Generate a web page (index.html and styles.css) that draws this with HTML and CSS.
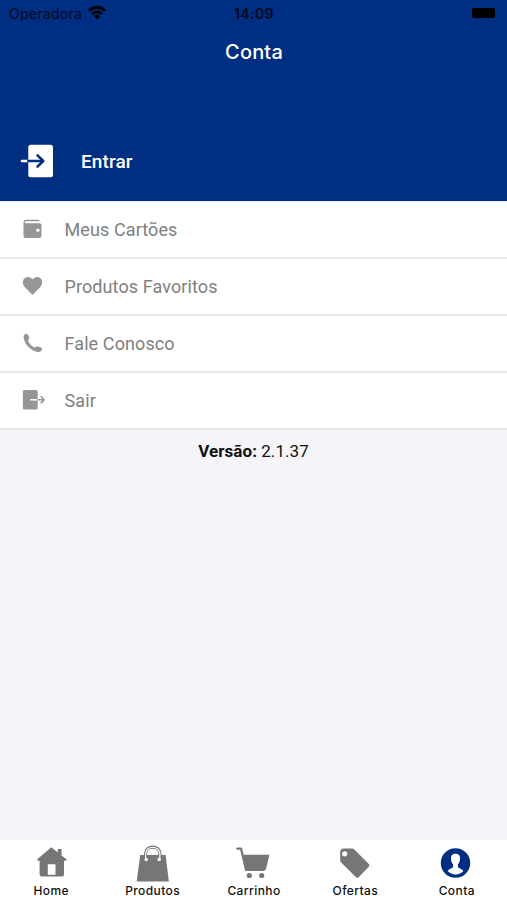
FILE: index.html
```html
<!DOCTYPE html>
<html lang="pt-BR">
<head>
<meta charset="utf-8">
<meta name="viewport" content="width=device-width, initial-scale=1">
<title>Conta</title>
<link rel="stylesheet" href="styles.css">
</head>
<body>
<div class="app">
  <header class="header">
    <div class="status">
      <div class="carrier"><span>Operadora</span>
        <svg width="20" height="16" viewBox="0 0 20 16" fill="none" stroke="#000" stroke-width="2.7"><path d="M1.9 5.7Q10 -1.2 18.1 5.7M4.9 9Q10 4.8 15.1 9"/><path d="M6.9 11Q10 8.5 13.1 11L10 14.3Z" fill="#000" stroke="none"/></svg>
      </div>
      <div class="time">14:09</div>
      <div class="power"><span class="battery"></span></div>
    </div>
    <h1 class="title">Conta</h1>
    <a class="login">
      <svg width="34" height="34" viewBox="0 0 34 34"><rect x="8.3" y="0.7" width="24.7" height="32.6" rx="2.5" fill="#fff"/><path d="M2 17h7" stroke="#fff" stroke-width="2.6" stroke-linecap="round"/><path d="M8.3 17h15M17.5 11.3l5.8 5.7-5.8 5.7" fill="none" stroke="#002e82" stroke-width="2.5" stroke-linecap="round" stroke-linejoin="round"/></svg>
      <span>Entrar</span>
    </a>
  </header>
  <nav class="menu">
    <a class="row"><svg width="24" height="24" viewBox="0 0 24 24" fill="#969696"><path d="M2.5 5Q2.5 2.7 5 2.7H17Q18.7 2.7 18.7 4.3H5Q3.8 4.3 3.8 5.3T5 6.3H18.3Q20.5 6.3 20.5 8.3V18.7Q20.5 20.9 18.3 20.9H4.5Q2.5 20.9 2.5 18.7Z"/><circle cx="16.9" cy="13.3" r="1.7" fill="#fff"/></svg><span>Meus Cartões</span></a>
    <a class="row"><svg width="24" height="24" viewBox="0 0 24 24" fill="#969696"><path d="M11.5 21L3.9 13.2C1.2 10.4 1.2 6.4 3.6 4.3C6 2.2 9.7 2.8 11.5 5.5C13.3 2.8 17 2.2 19.4 4.3C21.8 6.4 21.8 10.4 19.1 13.2Z"/></svg><span>Produtos Favoritos</span></a>
    <a class="row"><svg width="24" height="24" viewBox="0 0 24 24" fill="#969696"><path d="M4.3 3L6 2.8Q8 4.8 8.3 7.2L6.9 9.8C8.3 12.8 10.6 14.9 13.4 16.5L15.7 15.5Q19.3 15.2 21 17.5V18.9C19.7 20.6 17.7 21.4 15.7 20.8C9.1 18.9 3.9 13.5 2.7 7.2C2.3 5.3 2.9 3.9 4.3 3Z"/></svg><span>Fale Conosco</span></a>
    <a class="row"><svg width="24" height="24" viewBox="0 0 24 24"><rect x="1.8" y="2" width="14.9" height="19.5" rx="1.6" fill="#969696"/><path d="M9.3 11.8h7.4" stroke="#fff" stroke-width="1.5"/><path d="M16.7 11.8h6M19.7 8.3l3.3 3.5-3.3 3.5" fill="none" stroke="#969696" stroke-width="1.6"/></svg><span>Sair</span></a>
  </nav>
  <main class="content"><p class="version"><b>Versão:</b> 2.1.37</p></main>
  <footer class="tabs">
    <a class="tab"><svg width="40" height="40" viewBox="0 0 40 40" fill="#767676"><path fill-rule="evenodd" d="M20.3 5.3L26.8 10.5V7H30.5V13.4L35.8 17.6 35 18.8H33V32.4Q33 34.5 31 34.5H10.6Q8.6 34.5 8.6 32.4V18.8H7L6 17.5ZM16.8 22.3V32.7H24.5V22.3Z"/></svg><span>Home</span></a>
    <a class="tab"><svg width="40" height="40" viewBox="0 0 40 40" fill="none"><path d="M8.2 13H33.6L36.9 39.5H4.7Z" fill="#767676"/><g stroke-linecap="round"><path d="M14.3 17.4L13.5 15V12C13.5 2.7 28 2.7 28 12V15L27.2 17.4" stroke="#767676" stroke-width="3.2"/><path d="M14.3 17.6Q13.6 16.5 13.6 14V12C13.6 3 27.9 3 27.9 12V14Q27.9 16.5 27.2 17.6" stroke="#fff" stroke-width="1.2"/></g><circle cx="14.2" cy="17.5" r="1.7" fill="#fff"/><circle cx="27.2" cy="17.5" r="1.7" fill="#fff"/></svg><span>Produtos</span></a>
    <a class="tab"><svg width="40" height="40" viewBox="0 0 40 40" fill="#767676"><path d="M4.3 6.6H8L13.1 28" fill="none" stroke="#767676" stroke-width="2.3" stroke-linecap="round" stroke-linejoin="round"/><path d="M9.4 12.8H35.6Q36.4 12.8 36.2 13.8L33.2 26.5Q32.7 28.9 30.6 28.9H15Q12.9 28.9 12.3 26.7Z"/><circle cx="16.3" cy="33.5" r="2.6"/><circle cx="28.7" cy="33.5" r="2.6"/></svg><span>Carrinho</span></a>
    <a class="tab"><svg width="40" height="40" viewBox="0 0 40 40" fill="#767676"><path fill-rule="evenodd" d="M5.2 10.2Q5.2 6.6 8.7 6.6L16.8 6.5Q18.2 6.5 19.3 7.6L33.8 22.1Q35.1 23.4 33.8 24.7L23.7 35.2Q22.4 36.5 21.1 35.2L6.2 20.6Q5.2 19.5 5.2 18.2ZM9.7 9.2A2.6 2.6 0 1 0 9.7 14.4A2.6 2.6 0 1 0 9.7 9.2Z"/></svg><span>Ofertas</span></a>
    <a class="tab"><svg width="40" height="40" viewBox="0 0 40 40"><circle cx="19.5" cy="21" r="14.7" fill="#002e82"/><path d="M19.5 11.7C16.3 11.7 14.8 13.7 15 16.5C15.1 19.2 15.8 21.1 17.1 22.5V25.1C16.2 26.7 12.7 27.1 11.6 29C15.5 33.6 23.5 33.6 27.4 29C26.3 27.1 22.8 26.7 21.9 25.1V22.5C23.2 21.1 23.9 19.2 24 16.5C24.2 13.7 22.7 11.7 19.5 11.7Z" fill="#fff"/></svg><span>Conta</span></a>
  </footer>
</div>
</body>
</html>
```
FILE: styles.css
```css
* { box-sizing: border-box; }
body { margin: 0; font-family: Roboto, "Liberation Sans", sans-serif; }
.app { height: 900px; display: flex; flex-direction: column; background: #f4f4f9; }
.header { height: 201px; background: #002e82; color: #fff; }
.status {
  height: 28px;
  display: grid;
  grid-template-columns: 1fr auto 1fr;
  align-items: center;
  padding: 0 9px;
  color: #000;
  font: 14px/28px Inter, sans-serif;
}
.carrier { display: flex; align-items: center; gap: 5px; color: #00081c; letter-spacing: 0.28px; }
.carrier svg { margin-top: -3px; }
.time { padding-left: 1px; font-weight: 600; color: #00081c; letter-spacing: 0.4px; }
.power { display: flex; justify-content: flex-end; }
.battery { width: 23px; height: 10px; margin: -2px 3px 0 0; border-radius: 2px; background: #000; }
.title { margin: 9px 0 0; padding-left: 1px; text-align: center; font: 500 20px/30px Inter, sans-serif; letter-spacing: 0.15px; }
.login { display: flex; align-items: center; height: 34px; margin-top: 77px; padding-left: 20px; gap: 27px; font-size: 19px; font-weight: 500; letter-spacing: 0.1px; }
.menu { margin-top: 1px; box-shadow: 0 -1px #e8eaf0; }
.row {
  height: 57px;
  display: flex;
  align-items: center;
  gap: 19.5px;
  padding: 0 0 1px 21px;
  background: #fff;
  border-bottom: 2px solid #e8e8e8;
  color: #808080;
  font-size: 18px;
  letter-spacing: 0.1px;
}
.content { flex: 1; }
.version { margin: 10px 0 0; text-align: center; font-size: 17px; line-height: 22px; color: #111; letter-spacing: 0.05px; }
.tabs { height: 60px; display: grid; grid-template-columns: repeat(5, 1fr); background: #fff; }
.tab { display: flex; flex-direction: column; align-items: center; padding-top: 2px; color: #111; font: 500 12px/18px Inter, sans-serif; letter-spacing: 0.4px; }
.tab span { padding-left: 1px; }
```
